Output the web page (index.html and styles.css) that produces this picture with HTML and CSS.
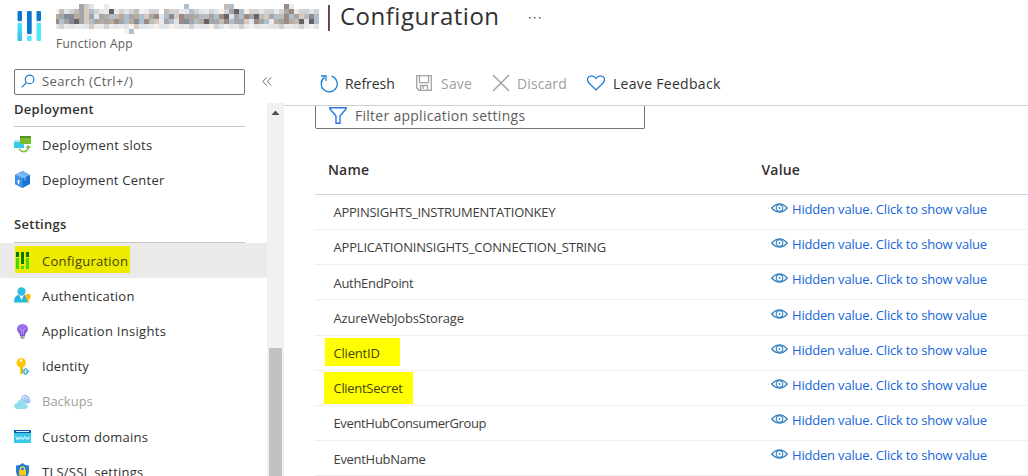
FILE: index.html
```html
<!DOCTYPE html>
<html lang="en">
<head>
<meta charset="utf-8">
<title>Configuration</title>
<link rel="stylesheet" href="styles.css">
</head>
<body>
<svg class="defs" width="0" height="0">
  <defs>
    <linearGradient id="cy" x1="0" y1="0" x2="0" y2="1"><stop offset="0" stop-color="#4fe3fb"/><stop offset="1" stop-color="#35bfe0"/></linearGradient>
    <linearGradient id="person" x1="0" y1="0" x2="0" y2="1"><stop offset="0" stop-color="#20a9df"/><stop offset="1" stop-color="#26bfe0"/></linearGradient>
    <linearGradient id="bulb" x1="0" y1="0" x2="0" y2="1"><stop offset="0" stop-color="#a67af4"/><stop offset="1" stop-color="#7a4fc8"/></linearGradient>
    <symbol id="eye" viewBox="0 0 17 10"><path d="M.7 5Q8.500-3.200 16.300 5Q8.500 13.200.7 5Z" fill="none" stroke="#2f7dc0" stroke-width="1.200"/><circle cx="8.500" cy="5" r="3.300" fill="none" stroke="#2f7dc0" stroke-width="1.100"/><circle cx="8.500" cy="5" r=".9" fill="#2f7dc0"/></symbol>
  </defs>
</svg>
<div class="page">
  <header class="header">
    <svg class="app-icon" viewBox="0 0 26 32">
      <rect x=".5" y="1" width="4.500" height="10" rx="1" fill="#0b78d0"/><rect x=".5" y="13" width="4.500" height="18" rx="1" fill="url(#cy)"/>
      <rect x="10" y="1" width="4.700" height="23" rx="1" fill="#0b78d0"/><rect x="10" y="26" width="4.700" height="5" rx="1" fill="#50e6ff"/>
      <rect x="19.500" y="1" width="4.500" height="10" rx="1" fill="#0b78d0"/><rect x="19.500" y="13" width="4.500" height="18" rx="1" fill="#50e6ff"/>
      <path d="M0 12h5.800M9.200 25h6.200M18.800 12h6" stroke="#e6e6e6" stroke-width="1.600"/>
    </svg>
    <div class="heading">
      <div class="title-row">
        <svg class="mosaic" id="mosaic" width="264" height="30" shape-rendering="crispEdges"></svg>
        <span class="bar"></span>
        <h1 class="title">Configuration</h1>
        <svg class="dots" width="14" height="4"><path d="M1 1h1.500v1.500H1zM6 1h1.500v1.500H6zM11 1h1.500v1.500H11z" fill="#555"/></svg>
      </div>
      <div class="subtitle">Function App</div>
    </div>
  </header>
  <div class="main">
    <aside class="side">
      <div class="search-row">
        <div class="search">
          <svg width="14" height="14" viewBox="0 0 14 14" fill="none" stroke="#1a7ed6" stroke-width="1.200"><circle cx="8.600" cy="5.400" r="4.300"/><path d="M5.500 8.500L.7 13.300"/></svg>
          <span class="search-text">Search (Ctrl+/)</span>
        </div>
        <svg class="collapse" width="10" height="9" viewBox="0 0 10 9" fill="none" stroke="#666" stroke-width="1"><path d="M4.700.5L.8 4.500l3.900 4M9.200.5L5.300 4.500l3.900 4"/></svg>
      </div>
      <div class="side-body">
        <nav class="nav">
          <div class="group first">Deployment</div>
          <div class="item raised"><svg class="ic" viewBox="0 0 17 17"><path d="M0 4h10v8H0z" fill="#37cbea"/><path d="M0 4h10v2H0z" fill="#b8e6ee"/><path d="M6 0h11v8H6z" fill="#76bc2d"/><path d="M6 0h11v2H6z" fill="#5b8f25"/><path d="M5 13Q10 18.500 14.200 13V11" fill="none" stroke="#7dbd3c" stroke-width="1.500"/><path d="M11.500 12L14.200 9 17 12z" fill="#7dbd3c"/></svg><span class="t-slots">Deployment slots</span></div>
          <div class="item raised"><svg class="ic" viewBox="0 0 17 17"><path d="M1 4L8.500 0 16 4v9l-7.500 4L1 13z" fill="#1775d6"/><path d="M1 4L8.500 0 16 4 8.500 7.500z" fill="#72b5f5"/><path d="M1 4l7.500 3.500V17L1 13z" fill="#3c8fe9"/><path d="M4.500 2.200L12 6v3l-2 1V6.500L2.500 3.200z" fill="#a9d2fa" opacity=".4"/><path d="M3 10.500l1.600-2 1.500 2.600-1 .1.100 2.200-1.300-.7V11z" fill="#fff"/></svg><span class="t-center">Deployment Center</span></div>
          <div class="group second">Settings</div>
          <div class="item selected"><span class="mark"><svg class="ic" viewBox="0 0 17 17"><path d="M1 0h3v5H1zM6 0h3v12H6zM11 0h3v5h-3z" fill="#087500"/><path d="M1 6h3v11H1zM6 14h3v3H6zM11 6h3v11h-3z" fill="#48d900"/></svg><span class="t-conf">Configuration</span></span></div>
          <div class="item"><svg class="ic" viewBox="0 0 17 17"><path d="M0 15.500Q0 8 5 8h5q3.500 0 4 7.500z" fill="url(#person)"/><path d="M5 8h5l-2.500 5z" fill="#fff"/><circle cx="7.500" cy="4.500" r="4.200" fill="#30bde4"/><circle cx="14" cy="9.500" r="2.700" fill="#fdb813"/><path d="M13 11h2v4l-1 1-1-1z" fill="#fdb813"/></svg><span class="t-auth">Authentication</span></div>
          <div class="item"><svg class="ic" viewBox="0 0 17 17"><path d="M8.500 1C5 1 3 3.300 3 6c0 3 3 4 3 7h5c0-3 3-4 3-7 0-2.700-2-5-5.500-5z" fill="url(#bulb)"/><path d="M7.500 12V7L5.500 5M9.500 12V7l2-2M7.500 7h2" fill="none" stroke="#d3bdfa" stroke-width=".6"/><path d="M6.300 13h4.400v1.800L9.500 16h-2l-1.200-1.200z" fill="#aaa"/></svg><span class="t-insights">Application Insights</span></div>
          <div class="item"><svg class="ic" viewBox="0 0 17 17"><path d="M7 0a4.800 4.800 0 0 1 2 9.200V15l-1.800 2L5.500 15l1-1.500-1-1.500 1-1.200-1-1.600A4.800 4.800 0 0 1 7 0z" fill="#fcc80c"/><circle cx="7" cy="2.500" r="1.200" fill="#fff"/><path d="M7.800 9v6" stroke="#e6a700" stroke-width=".7"/><path d="M11.500 9.500l4 4-4 4-4-4z" fill="#49b5d9"/><path d="M11.500 11v5M9.500 13.500h4" stroke="#d9f3fb" stroke-width=".8"/></svg><span class="t-id">Identity</span></div>
          <div class="item off"><svg class="ic" viewBox="0 0 17 17"><path d="M8 10Q5.500 7 7.500 4.500 10-1 14 3.200q2 1 1.600 3Q18 9 14.500 10.500z" fill="#a2c4f3"/><path d="M10.500 6.500l-2-1.500M9 4.500q3-2.500 4 1.500" fill="none" stroke="#fff" stroke-width="1"/><path d="M3 16Q-.5 15 .2 12 1 10 3 10q1-3.500 4.500-3t3.600 4q3 .5 2.600 3Q13.200 16 11 16z" fill="#91dfed"/></svg><span class="t-back">Backups</span></div>
          <div class="item"><svg class="ic" viewBox="0 0 17 17"><path d="M0 2h17v13H0z" fill="#35c8e8"/><path d="M0 2h17v3H0z" fill="#1259a8"/><path d="M2 3h13v1H2z" fill="#dceefa"/><path d="M2 8.500l1 3 1-2 1 2 1-3M6.700 8.500l.9 3 1-2 1 2 1-3M11.300 8.500l1 3 1-2 1 2 1-3" fill="none" stroke="#fff" stroke-width=".8"/></svg><span class="t-dom">Custom domains</span></div>
          <div class="item"><svg class="ic" viewBox="0 0 17 17"><path d="M2 2.500q4 0 6.500-2.500Q11 2.500 15 2.500V8q0 5.500-6.500 9Q2 13.500 2 8z" fill="#247fd3"/><path d="M6.500 7V5.800a2 2 0 0 1 4 0V7" fill="none" stroke="#fdd15d" stroke-width="1.300"/><path d="M5 7h7v5.500H5z" fill="#fcc80c"/></svg><span class="t-tls">TLS/SSL settings</span></div>
        </nav>
        <div class="scroll"><svg width="9" height="5" class="arrow"><path d="M.5 5L4.500.5 8.500 5z" fill="#505050"/></svg><div class="thumb"></div></div>
      </div>
    </aside>
    <section class="content">
      <div class="commands">
        <div class="cmd c-ref"><svg width="18" height="19" viewBox="0 0 18 19" fill="none" stroke="#1680d8" stroke-width="1.300"><path d="M11.500 2.200A8 8 0 1 1 4.500 3.400"/><path d="M1 2h5v5"/></svg><span>Refresh</span></div>
        <div class="cmd c-save off"><svg width="16" height="16" viewBox="0 0 16 16" fill="none" stroke="#a5a3a1" stroke-width="1.300"><path d="M.7.700h14.600v14.600H3L.7 13zM3.500.700v7h9v-7M4.500 15v-4.500h7V15M7 11v3"/></svg><span>Save</span></div>
        <div class="cmd c-disc off"><svg width="18" height="18" viewBox="0 0 18 18" stroke="#a3a3a3" stroke-width="1.500"><path d="M1 1l16 16M17 1L1 17"/></svg><span>Discard</span></div>
        <div class="cmd c-feed"><svg width="18" height="16" viewBox="0 0 18 16" fill="none" stroke="#1d78d8" stroke-width="1.200"><path d="M9 15L2 8C-1 4.500 1 .8 4.500.8 7 .8 8.200 2.200 9 3.500 9.800 2.200 11 .8 13.500.8 17 .8 19 4.500 16 8z"/></svg><span>Leave Feedback</span></div>
      </div>
      <div class="scroller">
        <div class="filter"><svg width="18" height="17" viewBox="0 0 18 17" fill="none" stroke="#2478e0" stroke-width="1.400"><path d="M.8.800h16.400v1L11 9v7.200H7V9L.8 1.800z"/></svg><span>Filter application settings</span></div>
        <div class="table">
          <div class="row head"><span class="name">Name</span><span class="th-value">Value</span></div>
          <div class="row"><span class="name k1">APPINSIGHTS_INSTRUMENTATIONKEY</span><a class="val"><svg class="eye"><use href="#eye"/></svg><span>Hidden value. Click to show value</span></a></div>
          <div class="row"><span class="name k2">APPLICATIONINSIGHTS_CONNECTION_STRING</span><a class="val"><svg class="eye"><use href="#eye"/></svg><span>Hidden value. Click to show value</span></a></div>
          <div class="row"><span class="name k3">AuthEndPoint</span><a class="val"><svg class="eye"><use href="#eye"/></svg><span>Hidden value. Click to show value</span></a></div>
          <div class="row"><span class="name k4">AzureWebJobsStorage</span><a class="val"><svg class="eye"><use href="#eye"/></svg><span>Hidden value. Click to show value</span></a></div>
          <div class="row"><span class="name k5"><span class="hl hl-id">ClientID</span></span><a class="val"><svg class="eye"><use href="#eye"/></svg><span>Hidden value. Click to show value</span></a></div>
          <div class="row"><span class="name k6"><span class="hl hl-secret">ClientSecret</span></span><a class="val"><svg class="eye"><use href="#eye"/></svg><span>Hidden value. Click to show value</span></a></div>
          <div class="row"><span class="name k7">EventHubConsumerGroup</span><a class="val"><svg class="eye"><use href="#eye"/></svg><span>Hidden value. Click to show value</span></a></div>
          <div class="row"><span class="name k8">EventHubName</span><a class="val"><svg class="eye"><use href="#eye"/></svg><span>Hidden value. Click to show value</span></a></div>
        </div>
      </div>
    </section>
  </div>
</div>
<script src="mosaic.js"></script>
</body>
</html>
```

FILE: styles.css
```css
* { box-sizing: border-box; }
body { margin: 0; background: #fff; color: #323130; font-family: "Open Sans", "Noto Sans", sans-serif; font-size: 13px; }
.defs { position: absolute; }
.page { width: 1028px; height: 476px; overflow: hidden; display: flex; flex-direction: column; }
svg { flex: none; display: block; }
span { white-space: nowrap; }

.header { height: 60px; flex: none; display: flex; padding-left: 17px; }
.app-icon { width: 26px; height: 32px; margin-top: 10px; }
.heading { margin-left: 13px; }
.title-row { display: flex; height: 36px; padding-top: 4px; }
.bar { width: 2px; height: 26px; margin: 1px 0 0 8px; background: linear-gradient(90deg, #8c2d2b 50%, #43668c 50%); }
.title { margin: -1px 0 0 10px; font-size: 24px; line-height: 26px; font-weight: 400; letter-spacing: 0.5px; width: 159px; white-space: nowrap; }
.dots { margin: 12px 0 0 29px; }
.subtitle { font-size: 12px; line-height: 16px; color: #605e5c; letter-spacing: 0.25px; }

.main { flex: 1; display: flex; min-height: 0; }
.side { width: 284px; flex: none; display: flex; flex-direction: column; }
.search-row { height: 43px; flex: none; display: flex; padding: 9px 0 0 14px; }
.search { width: 231px; height: 26px; border: 1px solid #767472; border-radius: 2px; display: flex; align-items: center; padding: 0 0 2px 6px; gap: 7px; color: #605e5c; letter-spacing: 0.35px; }
.collapse { margin: 8px 0 0 17px; }
.side-body { flex: 1; min-height: 0; display: flex; }
.nav { width: 267px; flex: none; overflow: hidden; letter-spacing: 0.25px; }
.group { margin: 0 22px 0 14px; border-bottom: 1px solid #c8c6c4; font-weight: 600; line-height: 18px; letter-spacing: 0.3px; }
.first { height: 24px; line-height: 13px; margin-bottom: 1px; }
.second { height: 45px; padding-top: 17px; }
.item { height: 35.15px; padding-left: 14px; display: flex; align-items: center; gap: 11px; }
.raised { padding-bottom: 2px; }
.ic { width: 17px; height: 17px; }
.selected { background: #ebeae9; padding-left: 15px; }
.mark { width: 115px; height: 27px; margin-top: -2px; background: #eeeb00; display: flex; align-items: center; gap: 10px; color: #45430a; padding-top: 2px; }
.side .off { color: #a19f9d; }
.t-id { letter-spacing: 0.12px; }
.t-back { letter-spacing: 0; }
.t-insights, .t-slots { letter-spacing: 0.3px; }
.scroll { width: 17px; background: #f1f1f1; display: flex; flex-direction: column; align-items: center; padding-top: 7px; }
.thumb { width: 13px; flex: 1; margin-top: 233px; background: #c1c1c1; }

.content { flex: 1; min-width: 0; display: flex; flex-direction: column; }
.commands { height: 46px; flex: none; border-bottom: 1px solid #d2d0ce; display: flex; align-items: center; padding-left: 36px; padding-top: 1px; font-size: 14px; }
.cmd { display: flex; align-items: center; gap: 7px; }
.commands .off { color: #a19f9d; }
.c-ref { width: 96px; letter-spacing: -0.05px; }
.c-save { width: 76px; gap: 9px; letter-spacing: 0.2px; }
.c-disc { width: 95px; letter-spacing: 0.1px; }
.c-feed { gap: 8px; letter-spacing: 0.3px; }
.scroller { flex: 1; min-height: 0; overflow: hidden; padding-left: 31px; }
.filter { width: 330px; height: 23px; border: 1px solid #767472; border-top: 0; border-radius: 0 0 2px 2px; display: flex; align-items: center; gap: 8px; padding: 0 0 3px 13px; font-size: 14px; color: #605e5c; letter-spacing: 0.27px; }
.table { margin-top: 16px; }
.row { height: 35.15px; border-bottom: 1px solid #f0efee; display: flex; }
.name { width: 456px; padding-left: 18.5px; line-height: 35px; font-size: 13px; flex: none; color: #3f3e3d; }
.head { height: 50px; border-color: #c6d3e0; }
.head span { font-size: 14px; font-weight: 600; line-height: 50px; color: #323130; letter-spacing: 0.15px; }
.head .name { width: 446.5px; padding-left: 13px; }
.k1 { letter-spacing: -0.26px; }
.k2 { letter-spacing: -0.19px; }
.k3, .k8 { letter-spacing: -0.3px; line-height: 36.500px; }
.k4, .k5 { letter-spacing: -0.2px; }
.k4 { line-height: 36px; }
.k6 { letter-spacing: -0.3px; }
.k7 { letter-spacing: -0.37px; }
.val { display: flex; height: 28.4px; align-items: center; gap: 4px; color: #1766d9; letter-spacing: -0.19px; }
.eye { width: 17px; height: 10px; margin-top: -2px; }
.hl { display: block; background: #ff0; color: #45430a; }
.hl-id { width: 75px; height: 28px; margin: 2px 0 0 -8.500px; padding-left: 8.500px; line-height: 31px; }
.hl-secret { width: 89px; height: 32px; margin: 1px 0 0 -9.500px; padding-left: 9.500px; line-height: 33px; }
```

FILE: mosaic.js
```js
// Pixelated resource name: each character selects a cell colour.
const palette = {
  a: '#f7f0eb', b: '#dfe5eb', c: '#d2d2d2', d: '#bebbb9', e: '#a5a5a7', f: '#858c95',
  g: '#666265', h: '#9c8b82', i: '#d6cbbe', j: '#b0bfcc', k: '#b9ab9b', l: '#eaeaea'
};
const rows = [
  '.....eib..l...............j.......dj..........hl.....',
  'adbcdeijcblglcbcdalcc.dcclbjcblcbacegjaccbcclcehlccbc',
  'keffkeiebekjdkjekjiehbjfiheekjdejhgbejhegdiejdhjeidfj',
  'hjefgeijekekhejkfjhdilejbhfejkgeedhjeeibhejlkehkdgbgj',
  'bclbllbillclblbaibblabbalblclbbacbablclabllbbcllbclab',
  '..............aj.....................................'
];
const host = document.getElementById('mosaic');
rows.forEach((row, y) => [...row].forEach((key, x) => {
  if (key === '.') return;
  const cell = document.createElementNS('http://www.w3.org/2000/svg', 'rect');
  cell.setAttribute('x', x ? 3 + (x - 1) * 5 : 0);
  cell.setAttribute('y', y * 5);
  cell.setAttribute('width', x ? 5 : 3);
  cell.setAttribute('height', 5);
  cell.setAttribute('fill', palette[key]);
  host.appendChild(cell);
}));
```
